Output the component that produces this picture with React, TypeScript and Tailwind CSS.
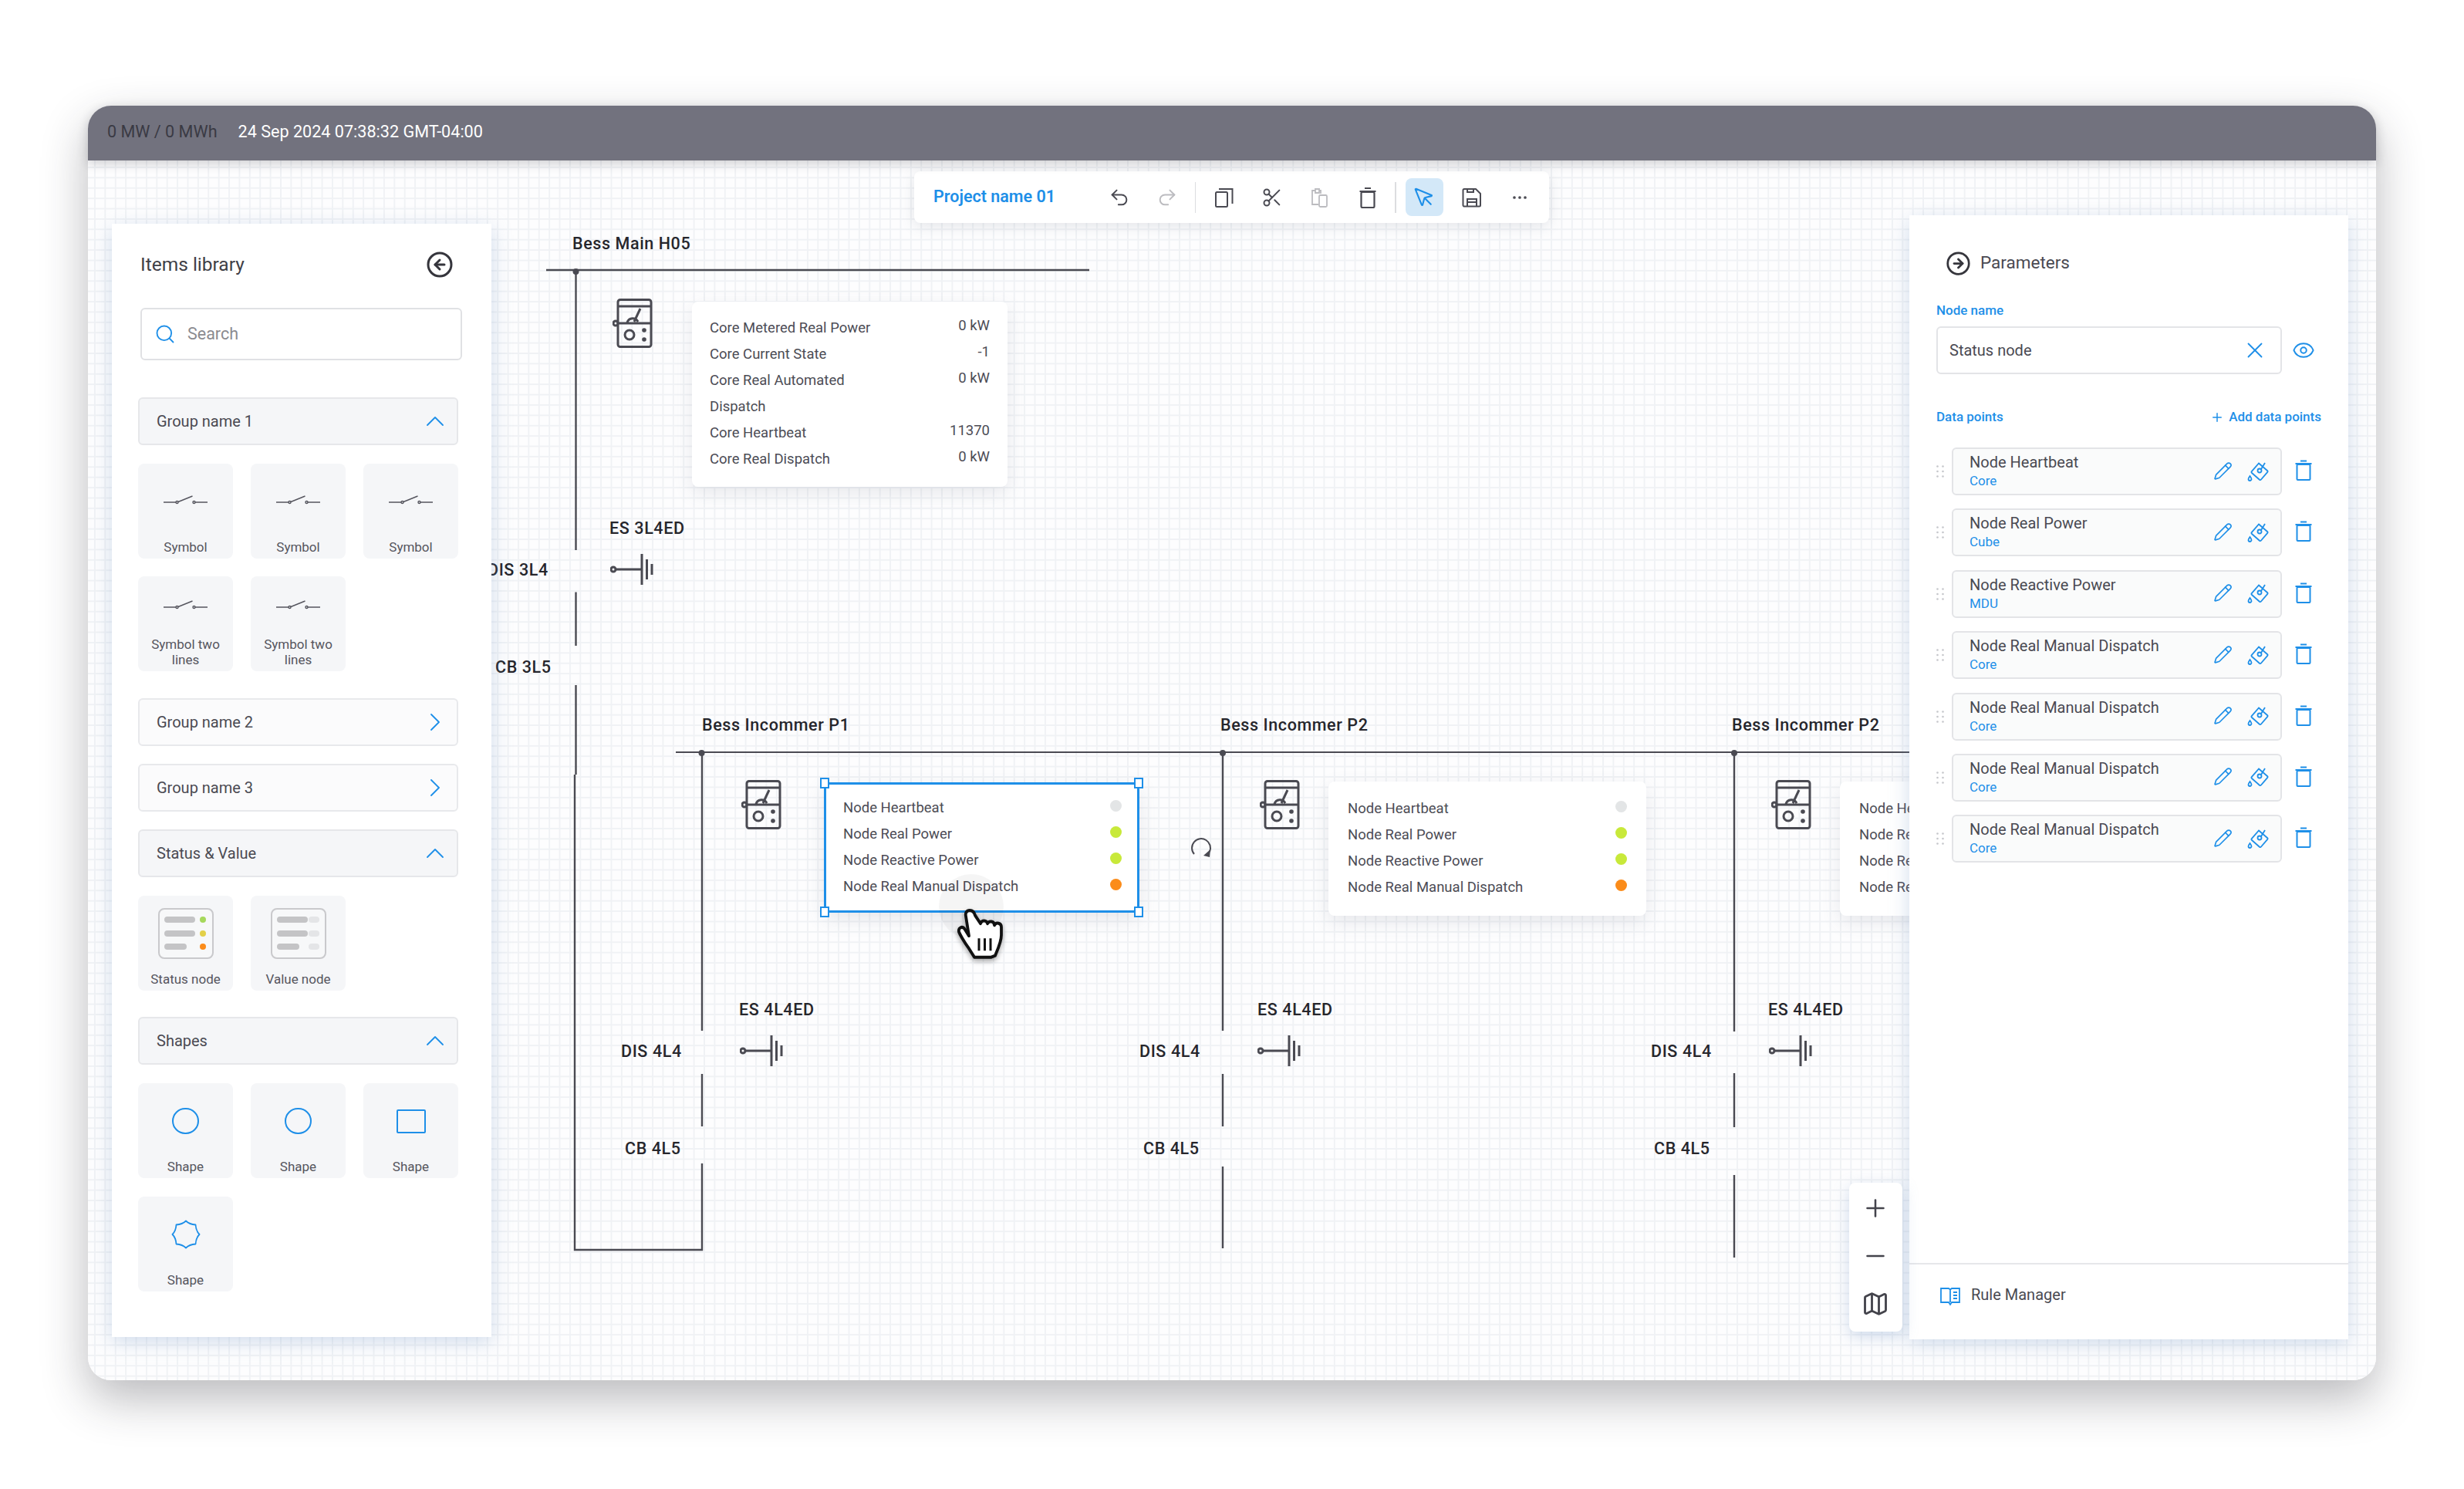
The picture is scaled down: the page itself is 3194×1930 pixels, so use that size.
import {
  ChevronRight,
  ChevronUp,
  CircleArrowLeft,
  CircleArrowRight,
  Ellipsis,
  Eye,
  Map as MapIcon,
  Minus,
  MousePointer,
  Pencil,
  Plus,
  Redo2,
  Scissors,
  Search,
  Undo2,
  X,
} from "lucide-react";
import type { ReactNode } from "react";

function Meter({ className }: { className: string }) {
  return (
    <svg viewBox="0 0 52 64" className={className} fill="none" stroke="#4a4a52" strokeWidth="3">
      <circle cx="4" cy="32" r="3" />
      <rect x="7" y="1.5" width="43" height="61" rx="3" />
      <path d="M7 10h43M7 32h43M28 30 36 13M19 31a7.5 7.5 0 0 1 14-1" />
      <circle cx="22" cy="47" r="6" />
      <circle cx="41" cy="41" r="2.8" fill="#4a4a52" stroke="none" />
      <circle cx="41" cy="53" r="2.8" fill="#4a4a52" stroke="none" />
    </svg>
  );
}

function Battery({ className }: { className: string }) {
  return (
    <svg viewBox="0 0 58 40" className={className} fill="none" stroke="#4a4a52" strokeWidth="3">
      <circle cx="4" cy="20" r="3" />
      <path d="M7 20h34M41 0v40M47.5 7v26M54 13v14" />
    </svg>
  );
}

function SwitchSymbol() {
  return (
    <svg width="57" height="20" viewBox="0 0 57 20" fill="none" stroke="#55555e" strokeWidth="1.4">
      <path d="M0 11h16M19 10.5 37.5 3M41 11h16" />
      <circle cx="17.5" cy="11" r="1.5" />
      <circle cx="39.5" cy="11" r="1.5" />
    </svg>
  );
}

function NodeThumb({ status }: { status: boolean }) {
  return (
    <svg width="72" height="66" viewBox="0 0 72 66" fill="none">
      <rect x="1" y="1" width="70" height="64" rx="7" fill="#f7f8f9" stroke="#c9c9cc" strokeWidth="2" />
      <rect x="8" y="11" width="40" height="8" rx="4" fill="#c4c4c6" />
      <rect x="8" y="29" width="40" height="8" rx="4" fill="#c4c4c6" />
      <rect x="8" y="46" width="29" height="8" rx="4" fill="#c4c4c6" />
      {status ? (
        <>
          <circle cx="58" cy="15" r="4" fill="#a6d85c" />
          <circle cx="58" cy="33" r="4" fill="#e3d048" />
          <circle cx="58" cy="50" r="4" fill="#fb8c1a" />
        </>
      ) : (
        <>
          <rect x="49" y="11" width="14" height="8" rx="4" fill="#e4e5e7" />
          <rect x="49" y="29" width="14" height="8" rx="4" fill="#e4e5e7" />
          <rect x="49" y="46" width="14" height="8" rx="4" fill="#e4e5e7" />
        </>
      )}
    </svg>
  );
}

function ScallopShape() {
  return (
    <svg width="40" height="40" viewBox="0 0 40 40" fill="none" stroke="#1e8fe8" strokeWidth="1.8" strokeLinejoin="round">
      <path d="M20 2.500Q24.500 7 32.500 7.500Q33 15.500 37.500 20Q33 24.500 32.500 32.500Q24.500 33 20 37.500Q15.500 33 7.500 32.500Q7 24.500 2.500 20Q7 15.500 7.500 7.500Q15.500 7 20 2.500Z" />
    </svg>
  );
}

function Tile({ label, icon }: { label: string; icon: ReactNode }) {
  return (
    <div className="flex h-[123px] w-[123px] flex-col items-center rounded-[8px] bg-[#f5f6f8] px-2 pb-[5px]">
      <div className="flex min-h-0 flex-1 items-center justify-center">{icon}</div>
      <div className="text-center text-[17px] leading-[20px] text-[#55555e]">{label}</div>
    </div>
  );
}

function GroupHeader({ label, open }: { label: string; open: boolean }) {
  return (
    <div
      className={
        open
          ? "flex h-[62px] w-[415px] items-center justify-between rounded-[6px] border-2 border-[#e6e7ea] bg-[#f5f6f8] pl-[22px] pr-[8px]"
          : "flex h-[62px] w-[415px] items-center justify-between rounded-[6px] border-2 border-[#e8e9ec] bg-[#fbfbfc] pl-[22px] pr-[8px]"
      }
    >
      <span className="text-[20px] text-[#4a4a52]">{label}</span>
      {open ? (
        <ChevronUp size={40} strokeWidth={1.1} className="text-[#1e8fe8]" />
      ) : (
        <ChevronRight size={40} strokeWidth={1.1} className="text-[#1e8fe8]" />
      )}
    </div>
  );
}

function ItemsLibrary() {
  const sw = <SwitchSymbol />;
  const circle = <span className="block h-[34px] w-[35px] rounded-full border-2 border-[#1e8fe8]" />;
  return (
    <aside className="absolute left-[31px] top-[76px] z-20 flex h-[1443px] w-[492px] flex-col bg-white px-[34px] pt-[37px] shadow-[0_6px_24px_rgba(120,155,200,0.34)]">
      <div className="ml-[3px] flex h-[32px] w-[406px] items-center justify-between">
        <span className="text-[24.5px] text-[#3f3f47]">Items library</span>
        <CircleArrowLeft size={36} strokeWidth={2} className="text-[#35353c]" />
      </div>
      <div className="ml-[3px] mt-[40px] flex h-[68px] w-[417px] items-center rounded-[6px] border-2 border-[#e0e1e4] pl-[16px]">
        <Search size={28} strokeWidth={1.6} className="text-[#1e8fe8]" />
        <span className="ml-[15px] text-[21.5px] text-[#8b8b90]">Search</span>
      </div>

      <div className="mt-[48px] flex flex-col">
        <GroupHeader label="Group name 1" open />
        <div className="mt-[24px] grid w-[415px] grid-cols-3 gap-x-[23px] gap-y-[23px]">
          <Tile label="Symbol" icon={sw} />
          <Tile label="Symbol" icon={sw} />
          <Tile label="Symbol" icon={sw} />
          <Tile label="Symbol two lines" icon={sw} />
          <Tile label="Symbol two lines" icon={sw} />
        </div>
        <div className="mt-[35px] flex flex-col gap-[23px]">
          <GroupHeader label="Group name 2" open={false} />
          <GroupHeader label="Group name 3" open={false} />
          <GroupHeader label="Status & Value" open />
        </div>
        <div className="mt-[24px] grid w-[415px] grid-cols-3 gap-x-[23px]">
          <Tile label="Status node" icon={<NodeThumb status />} />
          <Tile label="Value node" icon={<NodeThumb status={false} />} />
        </div>
        <div className="mt-[34px]">
          <GroupHeader label="Shapes" open />
        </div>
        <div className="mt-[24px] grid w-[415px] grid-cols-3 gap-x-[23px] gap-y-[24px]">
          <Tile label="Shape" icon={circle} />
          <Tile label="Shape" icon={circle} />
          <Tile label="Shape" icon={<span className="block h-[31px] w-[38px] rounded-[2px] border-2 border-[#1e8fe8]" />} />
          <Tile label="Shape" icon={<ScallopShape />} />
        </div>
      </div>
    </aside>
  );
}

function ToolBtn({ children, active }: { children: ReactNode; active?: boolean }) {
  return (
    <div
      className={
        active
          ? "flex h-[49px] w-[49px] items-center justify-center rounded-[8px] bg-[#d3e8f8]"
          : "flex h-[49px] w-[49px] items-center justify-center"
      }
    >
      {children}
    </div>
  );
}

function Toolbar() {
  return (
    <div className="absolute left-[1071px] top-[8px] z-20 flex h-[67px] w-[823px] items-center rounded-[8px] bg-white pl-[25px] shadow-[0_4px_18px_rgba(90,100,120,0.16)]">
      <span className="w-[216.5px] text-[21.5px] font-semibold text-[#1e8fe8]">Project name 01</span>
      <div className="flex items-center gap-[13px]">
        <ToolBtn>
          <Undo2 size={28} strokeWidth={1.7} className="text-[#4a4a52]" />
        </ToolBtn>
        <ToolBtn>
          <Redo2 size={28} strokeWidth={1.7} className="text-[#bcbcc0]" />
        </ToolBtn>
      </div>
      <div className="ml-[11px] mr-[12px] h-[40px] w-[1.5px] bg-[#dcdde0]" />
      <div className="flex items-center gap-[13px]">
        <ToolBtn>
          <svg width="26" height="26" viewBox="0 0 26 26" fill="none" stroke="#4a4a52" strokeWidth="2">
            <rect x="2" y="6" width="15" height="19" rx="1.5" />
            <path d="M6 2h17.5v19" />
          </svg>
        </ToolBtn>
        <ToolBtn>
          <Scissors size={28} strokeWidth={1.7} className="text-[#4a4a52]" />
        </ToolBtn>
        <ToolBtn>
          <svg width="26" height="26" viewBox="0 0 26 26" fill="none" stroke="#bcbcc0" strokeWidth="1.8">
            <path d="M11 22H3V4h4M7 2h5v5H7zM12 4h2v4" />
            <rect x="12" y="10" width="10" height="15" rx="1.5" />
          </svg>
        </ToolBtn>
        <ToolBtn>
          <svg width="26" height="28" viewBox="0 0 26 28" fill="none" stroke="#4a4a52" strokeWidth="2.2">
            <rect x="4.5" y="7" width="17" height="20" rx="1.5" />
            <path d="M2.5 6h21M9 2h8" />
          </svg>
        </ToolBtn>
      </div>
      <div className="ml-[11px] mr-[12px] h-[40px] w-[1.5px] bg-[#dcdde0]" />
      <div className="flex items-center gap-[13px]">
        <ToolBtn active>
          <MousePointer size={30} strokeWidth={1.7} className="text-[#1e8fe8]" />
        </ToolBtn>
        <ToolBtn>
          <svg width="26" height="26" viewBox="0 0 26 26" fill="none" stroke="#4a4a52" strokeWidth="2">
            <path d="M3 2h15l6 6v15a1.500 1.500 0 0 1-1.500 1.500h-19A1.500 1.500 0 0 1 1.500 23V3.500A1.500 1.500 0 0 1 3 2z" />
            <path d="M7 24v-9h12v9M7 19h12M7 2v4h8V2" />
          </svg>
        </ToolBtn>
        <ToolBtn>
          <Ellipsis size={24} strokeWidth={1.7} className="text-[#4a4a52]" />
        </ToolBtn>
      </div>
    </div>
  );
}

function TagIcon() {
  return (
    <svg width="28" height="27" viewBox="0 0 28 27" fill="none" stroke="#1e8fe8" strokeWidth="1.8">
      <path d="M15 3.500 26 13a1.500 1.500 0 0 1 .1 2.100L18 24.500a1.500 1.500 0 0 1-2.100.2L6 16a1.500 1.500 0 0 1-.1-2.100z" />
      <circle cx="16" cy="13" r="2.500" />
      <path d="M18 11 23 3" />
      <path d="M3.500 20c-1.500 2-2 3-2 4a2 2 0 0 0 4 0c0-1-.5-2-2-4z" />
    </svg>
  );
}

function TrashIcon() {
  return (
    <svg width="24" height="28" viewBox="0 0 24 28" fill="none" stroke="#1e8fe8" strokeWidth="2">
      <rect x="3.500" y="6" width="17" height="20" rx="1" />
      <path d="M1.500 5h21M8 1.500h8" />
    </svg>
  );
}

function DataPoint({ name, source }: { name: string; source: string }) {
  return (
    <div className="flex items-center">
      <svg width="10" height="16" viewBox="0 0 10 16" className="mr-[10px] shrink-0" fill="#c6c7cb">
        <circle cx="1.500" cy="1.500" r="1.300" />
        <circle cx="8.500" cy="1.500" r="1.300" />
        <circle cx="1.500" cy="8" r="1.300" />
        <circle cx="8.500" cy="8" r="1.300" />
        <circle cx="1.500" cy="14.500" r="1.300" />
        <circle cx="8.500" cy="14.500" r="1.300" />
      </svg>
      <div className="flex h-[62px] w-[427.5px] items-center justify-between rounded-[6px] border-2 border-[#e3e4e7] bg-[#fafbfb] pl-[21px] pr-[15px]">
        <div className="flex flex-col">
          <span className="text-[20px] leading-[24px] text-[#4a4a52]">{name}</span>
          <span className="text-[17px] leading-[24px] text-[#1e8fe8]">{source}</span>
        </div>
        <div className="mb-[2px] flex items-center gap-[19px]">
          <Pencil size={25} strokeWidth={1.6} className="text-[#1e8fe8]" />
          <TagIcon />
        </div>
      </div>
      <div className="mb-[2px] ml-[16.5px]">
        <TrashIcon />
      </div>
    </div>
  );
}

function Parameters() {
  return (
    <aside className="absolute left-[2361px] top-[65px] z-20 flex h-[1457px] w-[569px] flex-col bg-white pt-[47px] shadow-[0_6px_24px_rgba(120,155,200,0.34)]">
      <div className="flex h-[30px] items-center pl-[47px]">
        <CircleArrowRight size={33} strokeWidth={2} className="text-[#35353c]" />
        <span className="ml-[12px] text-[22.5px] text-[#4a4a52]">Parameters</span>
      </div>
      <div className="flex flex-1 flex-col px-[35px]">
        <div className="mt-[36px] text-[17px] font-medium leading-[20px] text-[#1e8fe8]">Node name</div>
        <div className="mt-[11px] flex items-center">
          <div className="flex h-[62px] w-[447.5px] items-center justify-between rounded-[6px] border-2 border-[#e3e4e7] pl-[15px] pr-[16px]">
            <span className="text-[20px] text-[#4a4a52]">Status node</span>
            <X size={34} strokeWidth={1.3} className="text-[#1e8fe8]" />
          </div>
          <Eye size={30} strokeWidth={1.6} className="ml-[13.5px] text-[#1e8fe8]" />
        </div>
        <div className="mt-[46px] flex h-[20px] items-center justify-between">
          <span className="text-[17px] font-medium text-[#1e8fe8]">Data points</span>
          <span className="flex items-center text-[17px] font-medium text-[#1e8fe8]">
            <Plus size={18} strokeWidth={2} className="mr-[6px]" />
            Add data points
          </span>
        </div>
        <div className="mt-[29px] flex flex-col gap-[17.4px]">
          <DataPoint name="Node Heartbeat" source="Core" />
          <DataPoint name="Node Real Power" source="Cube" />
          <DataPoint name="Node Reactive Power" source="MDU" />
          <DataPoint name="Node Real Manual Dispatch" source="Core" />
          <DataPoint name="Node Real Manual Dispatch" source="Core" />
          <DataPoint name="Node Real Manual Dispatch" source="Core" />
          <DataPoint name="Node Real Manual Dispatch" source="Core" />
        </div>
      </div>
      <div className="flex h-[99px] items-start border-t-2 border-[#e6e7ea] pl-[39px] pt-[27px]">
        <svg width="28" height="28" viewBox="0 0 28 28" fill="none" stroke="#1e8fe8" strokeWidth="1.8">
          <path d="M2 4h10l2 1.500L16 4h10v18H16l-2 3-2-3H2zM14 5.500V22" />
          <path d="M18 9h5M18 13h5M18 17h5" />
        </svg>
        <span className="ml-[13px] text-[20px] leading-[24px] text-[#4a4a52]">Rule Manager</span>
      </div>
    </aside>
  );
}

function ZoomControl() {
  return (
    <div className="absolute left-[2283px] top-[1319px] z-20 grid h-[193px] w-[69px] grid-rows-[62px_62px_62px] place-items-center rounded-[8px] bg-white pt-[2px] shadow-[0_6px_20px_rgba(120,155,200,0.35)]">
      <Plus size={36} strokeWidth={1.7} className="-ml-[2px] text-[#44444c]" />
      <Minus size={36} strokeWidth={1.7} className="-ml-[2px] text-[#44444c]" />
      <MapIcon size={36} strokeWidth={1.9} className="-ml-[2px] text-[#44444c]" />
    </div>
  );
}

function StatusRow({ label, dot }: { label: string; dot: string }) {
  return (
    <div className="flex h-[34px] items-center justify-between">
      <span className="text-[18.5px] text-[#4c4c55]">{label}</span>
      <span className={dot} />
    </div>
  );
}

const dotGray = "mb-[8px] h-[15px] w-[15px] rounded-full bg-[#e3e5e6]";
const dotLime = "mb-[8px] h-[15px] w-[15px] rounded-full bg-[#c8e93a]";
const dotOrange = "mb-[8px] h-[15px] w-[15px] rounded-full bg-[#fb8c1a]";

function StatusRows() {
  return (
    <>
      <StatusRow label="Node Heartbeat" dot={dotGray} />
      <StatusRow label="Node Real Power" dot={dotLime} />
      <StatusRow label="Node Reactive Power" dot={dotLime} />
      <StatusRow label="Node Real Manual Dispatch" dot={dotOrange} />
    </>
  );
}

function ValueRow({ label, value }: { label: string; value?: string }) {
  return (
    <div className="flex items-start justify-between">
      <span className="w-[232px] text-[18.5px] leading-[34px] text-[#4c4c55]">{label}</span>
      <span className="text-[18.5px] leading-[28px] text-[#4c4c55]">{value}</span>
    </div>
  );
}

const handle = "absolute h-[14px] w-[12px] border-2 border-[#1e8fe8] bg-white";

// wires are in page coordinates, hence the viewBox offset
function Wires() {
  return (
    <svg viewBox="114 214 2968 1576" className="absolute inset-0 h-full w-full" fill="none" stroke="#4a4a52" strokeWidth="2.4">
      <path d="M708 350H1412" />
      <path d="M746.500 350V713M746.500 767.500V837M746.500 888V1004M745 1004V1620H910V1508M910 1460V1392M910 1336V975" />
      <path d="M876 975H2480" strokeWidth="2.2" />
      <path d="M1585 975V1336M1585 1392V1460M1585 1512V1618" />
      <path d="M2248 975V1337M2248 1391V1461M2248 1523V1630" />
      <g fill="#4a4a52" stroke="none">
        <circle cx="746.500" cy="352" r="4" />
        <circle cx="909.500" cy="976" r="4" />
        <circle cx="1585" cy="976" r="4" />
        <circle cx="2248" cy="976" r="4" />
      </g>
    </svg>
  );
}

function Diagram() {
  const label = "absolute -translate-y-1/2 whitespace-nowrap text-[21.5px] font-medium leading-none tracking-[0.6px] text-[#26262c]";
  const card = "absolute flex flex-col rounded-[8px] bg-white shadow-[0_8px_24px_rgba(90,100,120,0.14)]";
  return (
    <>
      <Wires />

      <span className={`${label} left-[628px] top-[102px]`}>Bess Main H05</span>
      <span className={`${label} left-[676px] top-[471px]`}>ES 3L4ED</span>
      <span className={`${label} left-[518px] top-[525px]`}>DIS 3L4</span>
      <span className={`${label} left-[528px] top-[651px]`}>CB 3L5</span>
      <span className={`${label} left-[796px] top-[726px]`}>Bess Incommer P1</span>
      <span className={`${label} left-[1468px] top-[726px]`}>Bess Incommer P2</span>
      <span className={`${label} left-[2131px] top-[726px]`}>Bess Incommer P2</span>
      <span className={`${label} left-[844px] top-[1095px]`}>ES 4L4ED</span>
      <span className={`${label} left-[1516px] top-[1095px]`}>ES 4L4ED</span>
      <span className={`${label} left-[2178px] top-[1095px]`}>ES 4L4ED</span>
      <span className={`${label} left-[691px] top-[1149px]`}>DIS 4L4</span>
      <span className={`${label} left-[1363px] top-[1149px]`}>DIS 4L4</span>
      <span className={`${label} left-[2026px] top-[1149px]`}>DIS 4L4</span>
      <span className={`${label} left-[696px] top-[1275px]`}>CB 4L5</span>
      <span className={`${label} left-[1368px] top-[1275px]`}>CB 4L5</span>
      <span className={`${label} left-[2030px] top-[1275px]`}>CB 4L5</span>

      <Meter className="absolute left-[680px] top-[173px] h-[64px] w-[52px]" />
      <Meter className="absolute left-[847px] top-[797px] h-[64px] w-[52px]" />
      <Meter className="absolute left-[1519px] top-[797px] h-[64px] w-[52px]" />
      <Meter className="absolute left-[2182px] top-[797px] h-[64px] w-[52px]" />

      <Battery className="absolute left-[677px] top-[504px] h-[40px] w-[58px]" />
      <Battery className="absolute left-[845px] top-[1128px] h-[40px] w-[58px]" />
      <Battery className="absolute left-[1516px] top-[1128px] h-[40px] w-[58px]" />
      <Battery className="absolute left-[2179px] top-[1128px] h-[40px] w-[58px]" />

      <div className={`${card} left-[783px] top-[177px] h-[240px] w-[409px] px-[23px] pt-[17px]`}>
        <ValueRow label="Core Metered Real Power" value="0 kW" />
        <ValueRow label="Core Current State" value="-1" />
        <ValueRow label="Core Real Automated Dispatch" value="0 kW" />
        <ValueRow label="Core Heartbeat" value="11370" />
        <ValueRow label="Core Real Dispatch" value="0 kW" />
      </div>

      <div className="absolute left-[954px] top-[800px] flex h-[169px] w-[409px] flex-col border-[3px] border-[#1e8fe8] bg-white pb-0 pl-[22px] pr-[20px] pt-[14px] shadow-[0_8px_24px_rgba(90,100,120,0.14)]">
        <StatusRows />
        <span className={`${handle} -left-[8px] -top-[9px]`} />
        <span className={`${handle} -right-[8px] -top-[9px]`} />
        <span className={`${handle} -bottom-[9px] -left-[8px]`} />
        <span className={`${handle} -bottom-[9px] -right-[8px]`} />
      </div>
      <div className={`${card} left-[1608px] top-[799px] h-[174px] w-[412px] px-[25px] pt-[19px]`}>
        <StatusRows />
      </div>
      <div className={`${card} left-[2271px] top-[799px] h-[174px] w-[412px] px-[25px] pt-[19px]`}>
        <StatusRows />
      </div>

      <svg width="32" height="32" viewBox="0 0 32 32" className="absolute left-[1427px] top-[868px]" fill="none" stroke="#4a4a52" strokeWidth="2">
        <path d="M7 25A12 12 0 1 1 27 22" />
        <path d="M28 19l-1 10-8-2z" fill="#4a4a52" stroke="none" />
      </svg>

      <div className="absolute left-[1103px] top-[919px] h-[84px] w-[84px] rounded-full bg-black/[0.04]" />
      <svg width="60" height="68" viewBox="0 0 60 64" preserveAspectRatio="none" className="absolute left-[1127px] top-[964px] drop-shadow-[0_3px_3px_rgba(0,0,0,0.35)]" fill="#fff" stroke="#111" strokeWidth="3.8" strokeLinejoin="round">
        <path d="M16 2c-4 0-6 3-5 7l4 24-6-9c-3-3-8-1-7 4 1 3 8 14 12 19l8 12h22l5-2c4-9 8-17 8-25V22c0-5-7-6-9-2 0-5-7-6-9-2-1-4-7-5-9 0L23 8c-1-4-4-6-7-6z" />
        <path d="M28 36v15M35.500 36v15M43 36v15" strokeWidth="3" />
      </svg>
    </>
  );
}

export default function App() {
  return (
    <div className="h-[1930px] w-[3194px] overflow-hidden bg-white pl-[114px] pt-[137px] font-[Roboto,sans-serif]">
      <div className="flex h-[1652px] w-[2966px] flex-col rounded-[30px] bg-white shadow-[0_24px_60px_rgba(40,40,50,0.32)]">
        <header className="relative z-30 flex h-[71px] shrink-0 items-center gap-[27px] rounded-t-[30px] bg-[#72727e] pb-[3px] pl-[25px] text-[21.6px] shadow-[0_4px_14px_rgba(40,40,50,0.22)]">
          <span className="text-[#3a3a44]">0 MW / 0 MWh</span>
          <span className="text-white">24 Sep 2024 07:38:32 GMT-04:00</span>
        </header>
        <main className="relative flex-1 overflow-hidden rounded-b-[30px] bg-[#fdfdfe] bg-[linear-gradient(to_right,#f0f2f5_1.5px,transparent_1.5px),linear-gradient(to_bottom,#f0f2f5_1.5px,transparent_1.5px)] bg-[size:13.4px_13.4px] bg-[position:8px_8px]">
          <div className="relative mt-[6px] h-[1576px] w-[2968px]">
            <Diagram />
            <Toolbar />
            <ItemsLibrary />
            <Parameters />
            <ZoomControl />
          </div>
        </main>
      </div>
    </div>
  );
}
